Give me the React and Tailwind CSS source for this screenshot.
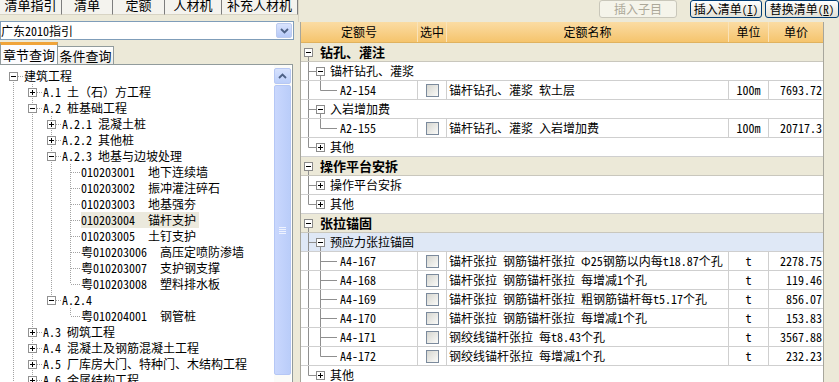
import React from 'react'

const DOT = '#a3a3a3'
const GLINE = '#8f8f8f'

const TABS = [
  { t: '清单指引', w: 'w-[62px]' },
  { t: '清单', w: 'w-[51px]' },
  { t: '定额', w: 'w-[52px]' },
  { t: '人材机', w: 'w-[57px]' },
  { t: '补充人材机', w: 'w-[76px]' },
]

const TREE = [
  {
    t: '建筑工程', open: true, kids: [
      { t: 'A.1 土（石）方工程', kids: [] },
      {
        t: 'A.2 桩基础工程', open: true, kids: [
          { t: 'A.2.1 混凝土桩', kids: [] },
          { t: 'A.2.2 其他桩', kids: [] },
          {
            t: 'A.2.3 地基与边坡处理', open: true, kids: [
              { code: '010203001', n: '地下连续墙' },
              { code: '010203002', n: '振冲灌注碎石' },
              { code: '010203003', n: '地基强夯' },
              { code: '010203004', n: '锚杆支护', sel: true },
              { code: '010203005', n: '土钉支护' },
              { code: '粤010203006', n: '高压定喷防渗墙' },
              { code: '粤010203007', n: '支护钢支撑' },
              { code: '粤010203008', n: '塑料排水板' },
            ],
          },
          { t: 'A.2.4', open: true, kids: [{ code: '粤010204001', n: '钢管桩' }] },
        ],
      },
      { t: 'A.3 砌筑工程', kids: [] },
      { t: 'A.4 混凝土及钢筋混凝土工程', kids: [] },
      { t: 'A.5 厂库房大门、特种门、木结构工程', kids: [] },
      { t: 'A.6 金属结构工程', kids: [] },
      { t: 'A.7 屋面及防水工程', kids: [] },
    ],
  },
  { t: '装饰装修工程', kids: [] },
]

const flatten = (nodes, cont, out) => {
  nodes.forEach((n, i) => {
    const last = i === nodes.length - 1
    out.push({ ...n, cont, last, first: cont.length === 0 && i === 0 })
    if (n.kids && n.open) flatten(n.kids, [...cont, !last], out)
  })
  return out
}

const ROWS_LEFT = flatten(TREE, [], [])

const A4 = [
  ['A4-167', '锚杆张拉 钢筋锚杆张拉 Φ25钢筋以内每t18.87个孔', '2278.75'],
  ['A4-168', '锚杆张拉 钢筋锚杆张拉 每增减1个孔', '119.46'],
  ['A4-169', '锚杆张拉 钢筋锚杆张拉 粗钢筋锚杆每t5.17个孔', '856.07'],
  ['A4-170', '锚杆张拉 钢筋锚杆张拉 每增减1个孔', '153.83'],
  ['A4-171', '钢绞线锚杆张拉 每t8.43个孔', '3567.88'],
  ['A4-172', '钢绞线锚杆张拉 每增减1个孔', '232.23'],
]

const GRID = [
  { k: 'g', t: '钻孔、灌注' },
  { k: 's', t: '锚杆钻孔、灌浆', open: true, lastSub: false },
  { k: 'l', code: 'A2-154', name: '锚杆钻孔、灌浆 软土层', unit: '100m', price: '7693.72', lastSub: false, lastLeaf: true },
  { k: 's', t: '入岩增加费', open: true, lastSub: false },
  { k: 'l', code: 'A2-155', name: '锚杆钻孔、灌浆 入岩增加费', unit: '100m', price: '20717.3', lastSub: false, lastLeaf: true },
  { k: 's', t: '其他', open: false, lastSub: true },
  { k: 'g', t: '操作平台安拆' },
  { k: 's', t: '操作平台安拆', open: false, lastSub: false },
  { k: 's', t: '其他', open: false, lastSub: true },
  { k: 'g', t: '张拉锚固' },
  { k: 's', t: '预应力张拉锚固', open: true, lastSub: false, hl: true },
  ...A4.map(([code, name, price], i) => ({
    k: 'l', code, name, unit: 't', price, lastSub: false, lastLeaf: i === A4.length - 1,
  })),
  { k: 's', t: '其他', open: false, lastSub: true },
]

// box with - or + sign, cx/cy are pixel centers
function SignBox({ x, y, plus, stroke = '#919191' }) {
  return (
    <>
      <rect x={x - 3.5} y={y - 3.5} width="8" height="8" fill="white" stroke={stroke} />
      <line x1={x - 2} y1={y + 0.5} x2={x + 3} y2={y + 0.5} stroke="#000" />
      {plus && <line x1={x + 0.5} y1={y - 2} x2={x + 0.5} y2={y + 3} stroke="#000" />}
    </>
  )
}

function Guide({ on }) {
  return (
    <svg width="19" height="16" className="shrink-0">
      {on && <line x1="9.5" y1="0" x2="9.5" y2="16" stroke={DOT} strokeDasharray="1 1" />}
    </svg>
  )
}

function Joint({ row }) {
  const leaf = !row.kids
  return (
    <svg width="19" height="16" className="shrink-0">
      {!row.first && <line x1="9.5" y1="0" x2="9.5" y2="8" stroke={DOT} strokeDasharray="1 1" />}
      {!row.last && <line x1="9.5" y1="8" x2="9.5" y2="16" stroke={DOT} strokeDasharray="1 1" />}
      <line x1="10" y1="8.5" x2="19" y2="8.5" stroke={DOT} strokeDasharray="1 1" />
      {!leaf && <SignBox x={9} y={8} plus={!row.open} />}
    </svg>
  )
}

function TreeRow({ row }) {
  return (
    <div className="h-[16px] flex items-center whitespace-nowrap">
      <div className="w-[4px] shrink-0" />
      {row.cont.map((on, i) => (
        <Guide key={i} on={on} />
      ))}
      <Joint row={row} />
      {row.code ? (
        <span className={`ml-[1px] pr-[3px] leading-[16px] flex ${row.sel ? 'bg-[#ebe9dd]' : ''}`}>
          <span>{row.code}</span>
          <span className="ml-[13px]">{row.n}</span>
        </span>
      ) : (
        <span className="ml-[1px] leading-[16px]">{row.t}</span>
      )}
    </div>
  )
}

function Chevron({ up }) {
  return (
    <svg width="9" height="6" viewBox="0 0 9 6">
      <polyline
        points={up ? '1,5 4.5,1.5 8,5' : '1,1 4.5,4.5 8,1'}
        fill="none"
        stroke="#4d6185"
        strokeWidth="1.8"
      />
    </svg>
  )
}

function Scrollbar() {
  return (
    <div className="w-[17px] mr-[1px] shrink-0 bg-[#fbfbf8] pt-[3px] flex flex-col">
      <div className="h-[16px] rounded-[2px] border border-[#b7c8f3] bg-gradient-to-b from-[#d7e2fd] to-[#bccffa] flex items-center justify-center">
        <Chevron up />
      </div>
      <div className="mt-[1px] h-[290px] rounded-[2px] border border-[#b5c7f5] bg-gradient-to-r from-[#c9d7fd] to-[#bacdf9] flex flex-col items-center justify-center gap-[1px]">
        <div className="w-[7px] h-[1px] bg-[#eef3ff]" />
        <div className="w-[7px] h-[1px] bg-[#eef3ff]" />
        <div className="w-[7px] h-[1px] bg-[#eef3ff]" />
        <div className="w-[7px] h-[1px] bg-[#eef3ff]" />
      </div>
    </div>
  )
}

function LeftPanel() {
  return (
    <div className="w-[298px] shrink-0 flex flex-col">
      <div className="h-[15px] flex overflow-hidden text-[13px]">
        {TABS.map((tab) => (
          <div
            key={tab.t}
            className={`${tab.w} h-[15px] bg-[#f4f3ee] border-r border-[#7d7d7d] border-b border-b-[#d8d4c4] flex justify-center leading-[9px]`}
          >
            {tab.t}
          </div>
        ))}
      </div>

      <div className="mt-[6px] h-[19px] w-[294px] bg-white border border-[#7f9db9] flex items-center">
        <span className="flex-1 leading-[17px]">广东2010指引</span>
        <div className="w-[16px] h-[15px] mr-[1px] rounded-[2px] border border-[#bccbee] bg-gradient-to-b from-[#d9e3fd] to-[#b6c9f7] flex items-center justify-center">
          <Chevron />
        </div>
      </div>

      <div className="mt-[2px] h-[22px] flex items-end text-[13px]">
        <div className="w-[58px] h-[22px] bg-[#fcfcfe] border-t-[3px] border-t-[#f0a43a] border-l border-r border-[#919b9c] flex items-center justify-center leading-[18px]">
          章节查询
        </div>
        <div className="w-[56px] h-[18px] bg-gradient-to-b from-white to-[#ecebe6] border-t border-r border-[#919b9c] flex items-center justify-center leading-[16px]">
          条件查询
        </div>
      </div>

      <div className="flex-1 min-h-0 w-[293px] bg-white border-t border-r border-[#919b9c] flex overflow-hidden">
        <div className="flex-1 min-w-0 pt-[3px] overflow-hidden">
          {ROWS_LEFT.map((row, i) => (
            <TreeRow key={i} row={row} />
          ))}
        </div>
        <Scrollbar />
      </div>
    </div>
  )
}

function GroupTree({ open }) {
  return (
    <svg width="16" height="18" className="shrink-0">
      <SignBox x={7} y={9} plus={!open} stroke="#8a8a8a" />
      {open && <line x1="7.5" y1="14" x2="7.5" y2="18" stroke={GLINE} />}
    </svg>
  )
}

function SubTree({ row }) {
  return (
    <svg width="28" height="18" className="shrink-0">
      <line x1="7.5" y1="0" x2="7.5" y2={row.lastSub ? 9.5 : 18} stroke={GLINE} />
      <line x1="7.5" y1="9.5" x2="15" y2="9.5" stroke={GLINE} />
      <SignBox x={19} y={9} plus={!row.open} stroke="#8a8a8a" />
      {row.open && <line x1="19.5" y1="14" x2="19.5" y2="18" stroke={GLINE} />}
    </svg>
  )
}

function LeafTree({ row }) {
  return (
    <svg width="38" height="18" className="shrink-0">
      {!row.lastSub && <line x1="7.5" y1="0" x2="7.5" y2="18" stroke={GLINE} />}
      <line x1="19.5" y1="0" x2="19.5" y2={row.lastLeaf ? 9.5 : 18} stroke={GLINE} />
      <line x1="19.5" y1="9.5" x2="36" y2="9.5" stroke={GLINE} />
    </svg>
  )
}

function GridRow({ row }) {
  if (row.k === 'g') {
    return (
      <div className="h-[19px] bg-[#ece9d8] border-b border-[#c9c7bd] flex items-center">
        <GroupTree open />
        <span className="ml-[3px] text-[13px] font-bold leading-[18px]">{row.t}</span>
      </div>
    )
  }
  if (row.k === 's') {
    return (
      <div className={`h-[19px] border-b border-[#cfcfcf] flex items-center ${row.hl ? 'bg-[#dfe8f6]' : 'bg-white'}`}>
        <SubTree row={row} />
        <span className="ml-[1px] leading-[18px]">{row.t}</span>
      </div>
    )
  }
  return (
    <div className="h-[19px] border-b border-[#cfcfcf] flex whitespace-nowrap">
      <div className="w-[117px] border-r border-[#cfcfcf] flex items-center">
        <LeafTree row={row} />
        <span className="ml-[1px] leading-[18px]">{row.code}</span>
      </div>
      <div className="w-[29px] border-r border-[#cfcfcf] flex items-center justify-center">
        <div className="w-[13px] h-[13px] border border-[#7b8a9c] bg-gradient-to-br from-[#d6d6d0] to-[#fbfbf9]" />
      </div>
      <div className="w-[282px] border-r border-[#cfcfcf] pl-[2px] leading-[18px] overflow-hidden">{row.name}</div>
      <div className="w-[40px] border-r border-[#cfcfcf] text-center leading-[18px]">{row.unit}</div>
      <div className="w-[54px] text-right pr-[1px] leading-[18px]">{row.price}</div>
    </div>
  )
}

function RightPanel() {
  const head = [
    ['定额号', 'w-[117px]'],
    ['选中', 'w-[29px]'],
    ['定额名称', 'w-[282px]'],
    ['单位', 'w-[40px]'],
    ['单价', 'w-[54px]'],
  ]
  return (
    <div className="flex-1 min-w-0 flex flex-col">
      <div className="h-[22px] shrink-0 flex items-start justify-end border-l border-[#d6d2c2]">
        <div className="w-[78px] h-[18px] shrink-0 rounded-[3px] border border-[#c9c7ba] bg-[#f5f4ea] text-[#aca899] flex items-center justify-center leading-[16px]">
          插入子目
        </div>
        <div className="ml-[13px] w-[72px] h-[18px] shrink-0 rounded-[3px] border border-[#003c74] bg-gradient-to-b from-white to-[#e3e1d6] flex items-center justify-center leading-[16px]">
          插入清单<span className="text-[11px]">(<span className="underline">I</span>)</span>
        </div>
        <div className="ml-[3px] w-[74px] h-[18px] shrink-0 rounded-[3px] border border-[#003c74] bg-gradient-to-b from-white to-[#e3e1d6] flex items-center justify-center leading-[16px]">
          替换清单<span className="text-[11px]">(<span className="underline">R</span>)</span>
        </div>
      </div>

      <div className="flex-1 min-h-0 ml-[2px] w-[524px] bg-white border-l border-r border-[#a7a69c] flex flex-col overflow-hidden">
        <div className="h-[21px] shrink-0 flex bg-gradient-to-b from-[#fbdca3] to-[#f5c46c] border-b border-[#e0b25e]">
          {head.map(([t, w], i) => (
            <div
              key={t}
              className={`${w} ${i < head.length - 1 ? 'border-r border-[#fae3b8]' : ''} flex items-center justify-center leading-[20px]`}
            >
              {t}
            </div>
          ))}
        </div>
        {GRID.map((row, i) => (
          <GridRow key={i} row={row} />
        ))}
      </div>
    </div>
  )
}

export default function App() {
  return (
    <div className="w-[839px] h-[382px] overflow-hidden bg-[#ece9d8] flex text-[12px] text-black font-['Noto_Sans_Mono_CJK_SC','Noto_Sans_CJK_SC',sans-serif]">
      <LeftPanel />
      <RightPanel />
    </div>
  )
}
